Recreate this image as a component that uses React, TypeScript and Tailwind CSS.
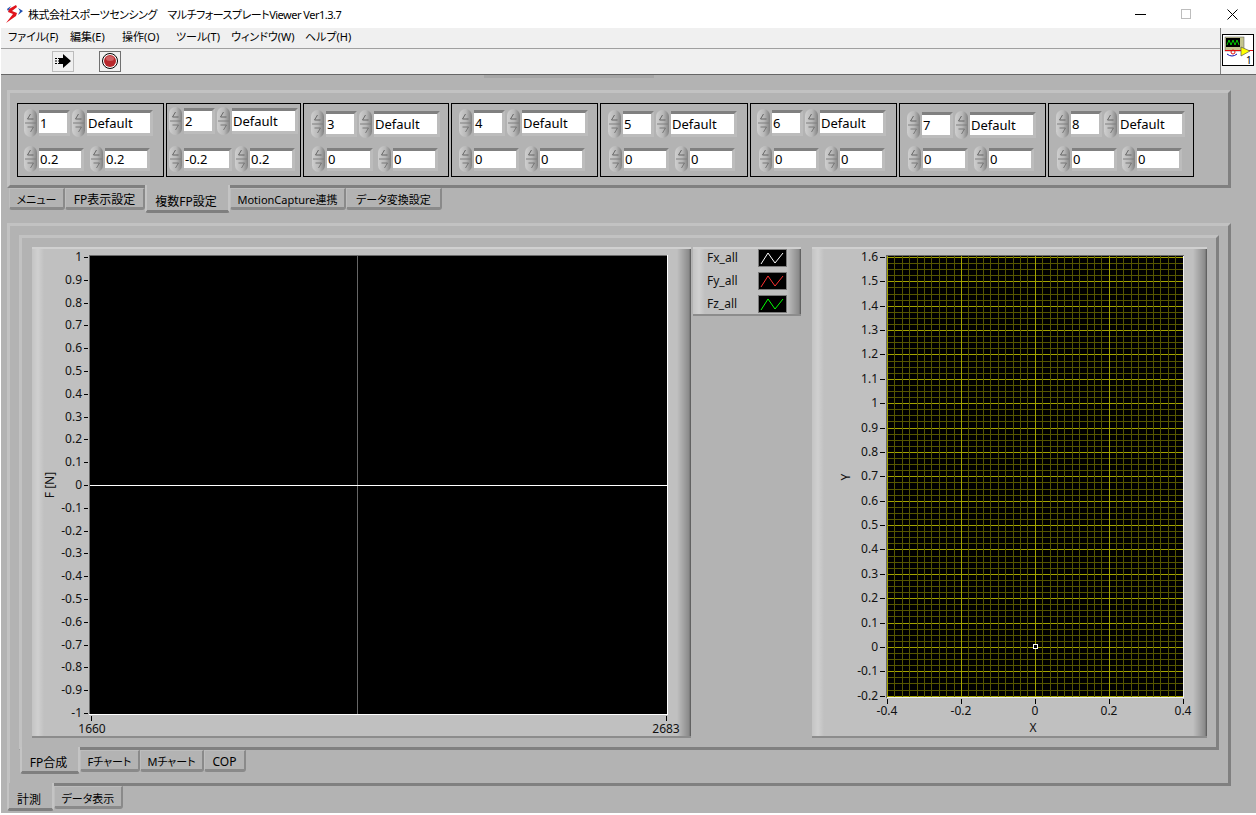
import { ReactNode } from "react";

const clusters = [
  { n: "1", a: "0.2", b: "0.2", box: "w-[147px]", r1: "ml-[6px] mt-[5px]", r2: "ml-[6px] mt-[9px]", first: "w-[41px] mr-[6px]" },
  { n: "2", a: "-0.2", b: "0.2", box: "w-[135px]", r1: "ml-[2px] mt-[3px]", r2: "ml-[2px] mt-[11px]", first: "w-[44px] mr-[3px]" },
  { n: "3", a: "0", b: "0", box: "w-[146px]", r1: "ml-[7px] mt-[6px]", r2: "ml-[8px] mt-[8px]", first: "w-[42px] mr-[5px]" },
  { n: "4", a: "0", b: "0", box: "w-[147px]", r1: "ml-[7px] mt-[5px]", r2: "ml-[7px] mt-[9px]", first: "w-[41px] mr-[6px]" },
  { n: "5", a: "0", b: "0", box: "w-[148px]", r1: "ml-[7px] mt-[6px]", r2: "ml-[8px] mt-[8px]", first: "w-[41px] mr-[6px]" },
  { n: "6", a: "0", b: "0", box: "w-[147px]", r1: "ml-[6px] mt-[5px]", r2: "ml-[8px] mt-[9px]", first: "w-[41px] mr-[6px]" },
  { n: "7", a: "0", b: "0", box: "w-[147px]", r1: "ml-[7px] mt-[7px]", r2: "ml-[8px] mt-[7px]", first: "w-[41px] mr-[6px]" },
  { n: "8", a: "0", b: "0", box: "w-[146px]", r1: "ml-[7px] mt-[6px]", r2: "ml-[8px] mt-[8px]", first: "w-[41px] mr-[5px]" },
];

const menus = [
  { label: "ファイル(F)", w: "w-[62px]" },
  { label: "編集(E)", w: "w-[52px]" },
  { label: "操作(O)", w: "w-[54px]" },
  { label: "ツール(T)", w: "w-[55px]" },
  { label: "ウィンドウ(W)", w: "w-[74px]" },
  { label: "ヘルプ(H)", w: "w-[60px]" },
];

function Spinner({ tall }: { tall?: boolean }) {
  const h = tall ? 28 : 26;
  const mid = h / 2;
  return (
    <svg width="13" height={h} viewBox={`0 0 13 ${h}`} className="shrink-0">
      <defs>
        <linearGradient id="spin" x1="0" x2="1" y1="0" y2="0">
          <stop offset="0" stopColor="#cfcfcf" />
          <stop offset="0.55" stopColor="#b8b8b8" />
          <stop offset="1" stopColor="#828282" />
        </linearGradient>
      </defs>
      <rect x="0" y="0" width="13" height={h} rx="6.5" fill="url(#spin)" />
      <line x1="1" x2="12" y1={mid} y2={mid} stroke="#7e7e7e" />
      <path d={`M6.5 ${mid - 9} L3.5 ${mid - 4} H9.5`} fill="none" stroke="#5c5c5c" strokeWidth="0.9" />
      <path d={`M3.5 ${mid + 4} H9.5 L6.5 ${mid + 9}`} fill="none" stroke="#707070" strokeWidth="0.9" />
    </svg>
  );
}

function Field({ value, className, tall }: { value: string; className: string; tall?: boolean }) {
  return (
    <div className={`bg-white border-t-[3px] border-r-[3px] border-b-[3px] border-t-[#808080] border-r-[#bcbcbc] border-b-[#bcbcbc] box-content pl-px flex items-center text-[13px] leading-none text-black ${tall ? "h-[20px]" : "h-[17px]"} ${className}`}>
      {value}
    </div>
  );
}

function Cluster({ c }: { c: (typeof clusters)[number] }) {
  return (
    <div className={`${c.box} h-[74px] border border-black shrink-0`}>
      <div className={`flex items-center ${c.r1}`}>
        <Spinner tall />
        <Field tall value={c.n} className="w-[27px] ml-[2px] mr-[2px]" />
        <Spinner tall />
        <Field tall value="Default" className="w-[62px] ml-[2px] pl-[2px]" />
      </div>
      <div className={`flex items-center ${c.r2}`}>
        <Spinner />
        <Field value={c.a} className={`ml-[2px] ${c.first}`} />
        <Spinner />
        <Field value={c.b} className="w-[41px] ml-[2px]" />
      </div>
    </div>
  );
}

function Tab({ label, selected, className }: { label: string; selected?: boolean; className: string }) {
  const look = selected
    ? "relative z-10 pt-[8px] pr-[3px] border-l-2 border-r-2 border-b-[3px] border-l-[#c4c4c4] border-r-[#c4c4c4] border-b-[#7f7f7f]"
    : "pt-[3px] border-t border-l border-r-2 border-b-[3px] border-t-[#bdbdbd] border-l-[#bdbdbd] border-r-[#8a8a8a] border-b-[#8a8a8a]";
  return (
    <div className={`bg-[#b3b3b3] rounded-b-[3px] flex items-center justify-center leading-none text-black shrink-0 ${look} ${className}`}>
      {label}
    </div>
  );
}

function Panel({ className, children }: { className: string; children: ReactNode }) {
  return (
    <div className={`border-[3px] border-t-[#c2c2c2] border-l-[#c2c2c2] border-r-[#808080] border-b-[#808080] shrink-0 ${className}`}>
      {children}
    </div>
  );
}

function Bevel({ className, children }: { className: string; children: ReactNode }) {
  return (
    <div className={`bg-[linear-gradient(90deg,#c4c4c4_0,#d0d0d0_6px,#c0c0c0_12px,#c0c0c0_calc(100%-14px),#8a8a8a_calc(100%-2px),#555_100%)] border-t-2 border-b-2 border-t-[#d0d0d0] border-b-[#8c8c8c] shrink-0 ${className}`}>
      {children}
    </div>
  );
}

function ForceChart() {
  const ticks = Array.from({ length: 21 }, (_, i) => (10 - i) / 10);
  return (
    <svg width="659" height="487" viewBox="0 1 659 487" className="block text-[12px]" fill="#111">
      {ticks.map((t, i) => {
        const y = Math.round(9 + i * 22.8);
        return (
          <g key={i}>
            <line x1="52" x2="56" y1={y + 0.5} y2={y + 0.5} stroke="#000" />
            <text x="50" y={y + 4} textAnchor="end">{t}</text>
          </g>
        );
      })}
      <rect x="57" y="7" width="579" height="460" fill="#fff" />
      <rect x="57" y="7" width="1" height="459" fill="#6a6a6a" />
      <rect x="57" y="7" width="578" height="1" fill="#6a6a6a" />
      <rect x="58" y="8" width="577" height="458" fill="#000" />
      <rect x="325" y="8" width="1" height="458" fill="#666" />
      <rect x="58" y="237" width="577" height="1" fill="#fff" />
      <line x1="59.5" x2="59.5" y1="468" y2="473" stroke="#000" />
      <line x1="634.5" x2="634.5" y1="468" y2="473" stroke="#000" />
      <text x="60" y="485" textAnchor="middle">1660</text>
      <text x="634" y="485" textAnchor="middle">2683</text>
      <text transform="translate(22 237) rotate(-90)" textAnchor="middle">F [N]</text>
    </svg>
  );
}

function CopChart() {
  const yStep = 24.37;
  const xStep = 36.95;
  const yTicks = Array.from({ length: 19 }, (_, i) => (16 - i) / 10);
  const xTicks = [-0.4, -0.2, 0, 0.2, 0.4];
  const top = 8;
  const left = 75;
  const bottom = 449;
  const right = 371;
  const minorH = Array.from({ length: 73 }, (_, i) => Math.round(top + 1 + (i * yStep) / 4));
  const minorV = Array.from({ length: 41 }, (_, i) => Math.round(left + (i * xStep) / 5));
  return (
    <svg width="395" height="487" viewBox="0 1 395 487" className="block text-[12px]" fill="#111">
      {yTicks.map((t, i) => {
        const y = Math.round(top + 1 + i * yStep);
        return (
          <g key={i}>
            <line x1="68" x2="73" y1={y + 0.5} y2={y + 0.5} stroke="#000" />
            <text x="66" y={y + 4} textAnchor="end">{t}</text>
          </g>
        );
      })}
      <rect x={left} y={top} width={right - left} height={bottom - top} fill="#000" />
      <g shapeRendering="crispEdges">
        {minorH.map((y, i) => (
          <line key={i} x1={left} x2={right} y1={y + 0.5} y2={y + 0.5} stroke={i % 4 === 0 ? "#a3a300" : "#565600"} />
        ))}
        {minorV.map((x, i) => (
          <line key={i} x1={x + 0.5} x2={x + 0.5} y1={top} y2={bottom} stroke={i % 10 === 0 ? "#a3a300" : "#565600"} />
        ))}
      </g>
      <rect x="74" y="7" width="298" height="1" fill="#6a6a6a" />
      <rect x="74" y="7" width="1" height="443" fill="#6a6a6a" />
      <rect x="75" y={bottom} width="297" height="1" fill="#f0f0f0" />
      <rect x={right} y="8" width="1" height="442" fill="#f0f0f0" />
      <rect x="221.5" y="396.5" width="4" height="4" fill="#000" stroke="#fff" />
      {xTicks.map((t, i) => {
        const x = Math.round(left + i * xStep * 2);
        return (
          <g key={i}>
            <line x1={x + 0.5} x2={x + 0.5} y1="451" y2="456" stroke="#000" />
            <text x={x} y="467" textAnchor="middle">{t}</text>
          </g>
        );
      })}
      <text x="221" y="484" textAnchor="middle">X</text>
      <text transform="translate(38 229) rotate(-90)" textAnchor="middle">Y</text>
    </svg>
  );
}

function LegendRow({ name, color }: { name: string; color: string }) {
  return (
    <div className="flex items-center h-[18px] mb-[5px]">
      <span className="w-[65px] pl-[14px] text-[12px] leading-none text-[#111]">{name}</span>
      <svg width="29" height="18" viewBox="0 0 29 18" className="shrink-0">
        <rect x="0.5" y="0.5" width="28" height="17" fill="#000" stroke="#7a7a7a" />
        <path d="M3 15 L10 4 L17 14 L25 4" fill="none" stroke={color} strokeWidth="1" />
      </svg>
    </div>
  );
}

function Logo() {
  return (
    <svg width="17" height="18" viewBox="0 0 17 18">
      <path d="M10 0 L3 4 L2 7 L7 9 L0 18 L10 11 L11 8 L6 6 L11 2 Z" fill="#e0141c" />
      <path d="M12 3 L17 6 L12 10 L14 6 Z" fill="#1f4fb0" />
      <path d="M5 1 L1 4 L2 6 Z" fill="#1f4fb0" />
    </svg>
  );
}

function ViIcon() {
  return (
    <svg width="32" height="32" viewBox="0 0 32 32" className="block">
      <rect x="0.5" y="0.5" width="31" height="31" fill="#fff" stroke="#000" />
      <rect x="3" y="3" width="19" height="14" fill="#c4c48e" stroke="#555" strokeWidth="0.5" />
      <rect x="4" y="4" width="14" height="9" fill="#000" />
      <path d="M5 11 L7 6 L9 11 L11 6 L13 11 L15 6 L17 11" fill="none" stroke="#00d000" />
      <path d="M3 16.5 H31" stroke="#e01010" />
      <circle cx="11" cy="18" r="2" fill="none" stroke="#e01010" />
      <path d="M5 20 Q10 24 15 20" fill="none" stroke="#1010b0" />
      <path d="M19 13 L28 17 L19 22 Z" fill="#ffff00" stroke="#555" strokeWidth="0.7" />
      <text x="24" y="30" className="text-[10px]" fill="#000">1</text>
    </svg>
  );
}

export default function App() {
  return (
    <div className="w-[1256px] h-[815px] overflow-hidden bg-white border-l border-white font-['Noto_Sans','Noto_Sans_CJK_JP',sans-serif] [font-feature-settings:'palt']">
      <div className="h-[28px] flex items-center pl-[5px] bg-white text-[11px] leading-none text-black">
        <Logo />
        <span className="ml-[5px] tracking-[-0.5px]">株式会社スポーツセンシング　マルチフォースプレートViewer Ver1.3.7</span>
        <div className="ml-auto flex items-center">
          <span className="w-[11px] h-px bg-black mr-[35px]" />
          <span className="w-[10px] h-[10px] border border-[#bdbdbd] mr-[36px]" />
          <svg width="11" height="11" viewBox="0 0 11 11" className="mr-[18px]">
            <path d="M0.5 0.5 L10.5 10.5 M10.5 0.5 L0.5 10.5" stroke="#000" fill="none" />
          </svg>
        </div>
      </div>

      <div className="flex h-[46px] bg-[#f0f0f0]">
        <div className="w-[1219px]">
          <div className="h-[21px] border-b border-[#a0a0a0] flex items-center pl-[7px] pb-[3px] text-[11px] leading-none text-black">
            {menus.map((m) => (
              <span key={m.label} className={m.w}>{m.label}</span>
            ))}
          </div>
          <div className="h-[24px] flex items-center pl-[51px]">
            <div className="w-[22px] h-[21px] border border-[#bcbcbc] flex items-center justify-center">
              <svg width="16" height="14" viewBox="0 0 16 14">
                <path d="M8 0 L16 7 L8 14 V10 H4 V4 H8 Z" fill="#000" />
                <path d="M0 4.5 H4 M0 7 H4 M0 9.5 H4" stroke="#000" strokeDasharray="2 1" />
              </svg>
            </div>
            <div className="w-[22px] h-[21px] ml-[25px] border border-[#707070] flex items-center justify-center">
              <svg width="16" height="16" viewBox="0 0 16 16">
                <circle cx="8" cy="8" r="7.5" fill="#fff" stroke="#000" />
                <circle cx="8" cy="8" r="6" fill="#b8282c" />
                <ellipse cx="8" cy="5.5" rx="4" ry="2.5" fill="#d06064" />
              </svg>
            </div>
          </div>
        </div>
        <div className="flex-1 border-l border-[#808080] pl-px pt-[6px]">
          <ViIcon />
        </div>
      </div>

      <div className="h-[739px] bg-[#b3b3b3] border-t border-[#666] pl-[6px]">
        <div className="h-[3px] w-[170px] ml-[477px] bg-[#a6a6a6]" />
        <Panel className="w-[1224px] h-[98px] mt-[12px]">
          <div className="flex gap-[2px] pl-[7px] pt-[10px]">
            {clusters.map((c) => (
              <Cluster key={c.n} c={c} />
            ))}
          </div>
        </Panel>

        <div className="flex h-[23px] pl-[2px]">
          <Tab label="メニュー" className="w-[56px] h-[22px] text-[11px]" />
          <Tab label="FP表示設定" className="w-[80px] h-[22px] text-[12px]" />
          <Tab selected label="複数FP設定" className="w-[85px] h-[28px] -mt-[3px] text-[12px]" />
          <Tab label="MotionCapture連携" className="w-[116px] h-[22px] text-[11px]" />
          <Tab label="データ変換設定" className="w-[96px] h-[22px] text-[11px]" />
        </div>

        <Panel className="w-[1224px] h-[563px] mt-[12px] pl-[9px] pt-[9px]">
          <Panel className="w-[1200px] h-[515px] pl-[10px] pt-[9px]">
            <div className="flex h-[491px]">
              <Bevel className="w-[659px] h-[491px]">
                <ForceChart />
              </Bevel>
              <Bevel className="w-[108px] h-[69px] ml-[2px]">
                <LegendRow name="Fx_all" color="#ffffff" />
                <LegendRow name="Fy_all" color="#ff3030" />
                <LegendRow name="Fz_all" color="#00ff00" />
              </Bevel>
              <Bevel className="w-[395px] h-[491px] ml-[11px]">
                <CopChart />
              </Bevel>
            </div>
          </Panel>
          <div className="flex pl-px">
            <Tab selected label="FP合成" className="w-[60px] h-[27px] -mt-[3px] text-[12px]" />
            <Tab label="Fチャート" className="w-[60px] h-[22px] text-[11px]" />
            <Tab label="Mチャート" className="w-[64px] h-[22px] text-[11px]" />
            <Tab label="COP" className="w-[42px] h-[22px] text-[12px]" />
          </div>
        </Panel>

        <div className="flex">
          <Tab selected label="計測" className="w-[47px] h-[28px] -mt-[3px] text-[12px]" />
          <Tab label="データ表示" className="w-[69px] h-[23px] text-[11px]" />
        </div>
      </div>
    </div>
  );
}
